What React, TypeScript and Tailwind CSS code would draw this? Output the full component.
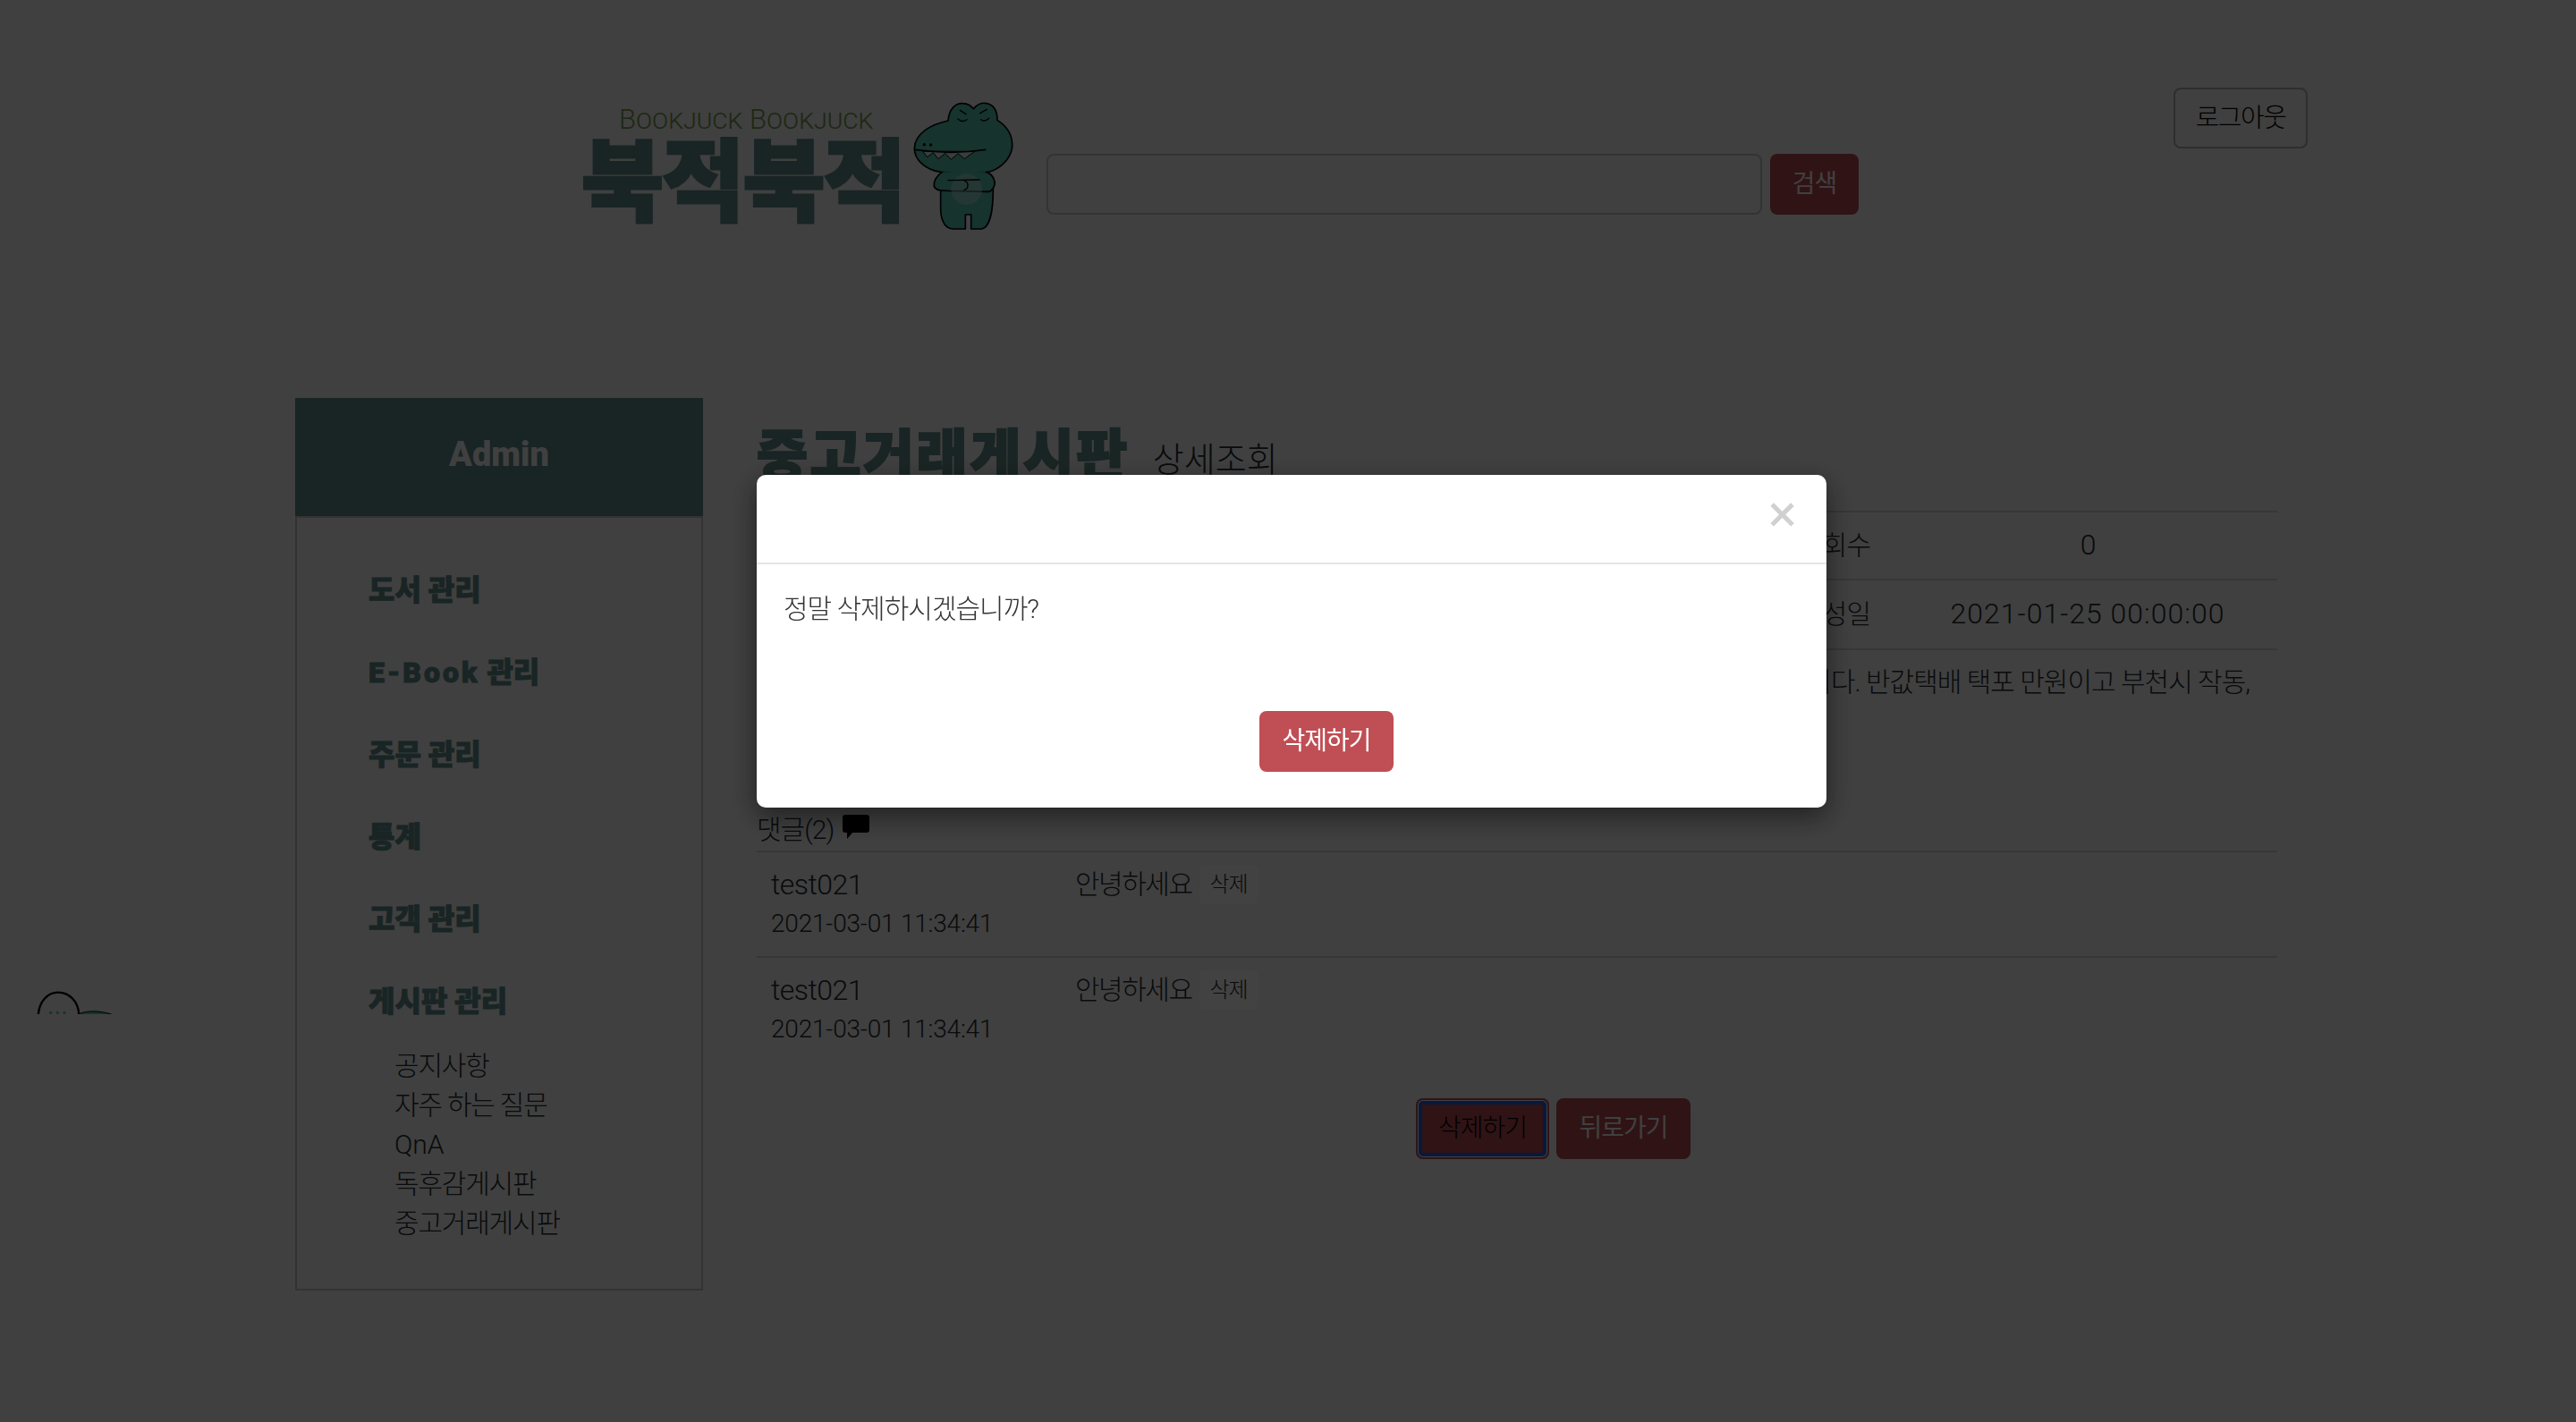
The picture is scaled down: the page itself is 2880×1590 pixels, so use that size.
const sans = "font-['Roboto','Noto_Sans_CJK_KR',sans-serif]";

function Croc() {
  return (
    <svg viewBox="0 0 390 480" className="w-[130px] h-[160px] shrink-0">
      <g stroke="#000" strokeWidth="5" strokeLinejoin="round" strokeLinecap="round">
        <path d="M110 320 L110 385 C110 420 122 452 152 453 L193 453 L193 405 L212 405 L212 453 L248 453 C272 448 286 400 286 320 Z" fill="#4cab9c" />
        <path d="M135 90 C138 50 160 30 185 32 C203 33 214 42 220 50 C232 35 250 28 265 32 C290 38 300 60 300 88 C335 110 352 140 350 178 C345 222 300 262 255 264 C210 268 150 266 110 262 C60 255 22 222 22 182 C24 130 80 102 135 90 Z" fill="#4cab9c" />
        <path d="M50 193 L65 212 L85 197 L102 218 L125 199 L145 220 L168 200 L190 218 L222 194 Z" fill="#c0d0c8" strokeWidth="3" />
        <path d="M25 187 C100 198 190 198 260 187" fill="none" />
        <path d="M175 55 L195 68 M265 52 L242 65 M168 84 Q183 98 198 86 M245 86 Q258 96 272 82" fill="none" strokeWidth="4" />
        <path d="M115 262 C95 275 85 295 88 310 C92 325 115 324 135 325 L270 328 C285 325 295 305 290 290 C285 275 275 265 262 262" fill="#4cab9c" />
        <circle cx="197" cy="320" r="52" fill="#a8c8c0" fillOpacity="0.5" stroke="none" />
        <path d="M135 290 L240 288 M190 292 C205 295 205 320 188 322" fill="none" strokeWidth="4" />
        <circle cx="55" cy="170" r="5" fill="#000" stroke="none" />
        <circle cx="77" cy="171" r="5" fill="#000" stroke="none" />
      </g>
    </svg>
  );
}

function Peek() {
  return (
    <div className="absolute left-[30px] top-[1095px] w-[110px] h-[39px] overflow-hidden">
      <svg viewBox="0 0 330 150" className="w-[110px] h-[50px]">
        <path d="M38 125 C40 72 72 44 105 44 C140 44 175 72 175 125" fill="none" stroke="#000" strokeWidth="7" />
        <path d="M175 116 C205 103 250 106 285 118 L285 130 L175 130 Z" fill="#4cab9c" stroke="#000" strokeWidth="3" />
        <circle cx="80" cy="112" r="5" fill="#4cab9c" />
        <circle cx="103" cy="112" r="5" fill="#4cab9c" />
        <circle cx="126" cy="112" r="5" fill="#4cab9c" />
      </svg>
    </div>
  );
}

function NavItem({ children }: { children: React.ReactNode }) {
  return (
    <div className="h-[92px] flex items-center text-[32px] font-black text-[#567b78] tracking-[0px] [-webkit-text-stroke:1px_#567b78]">
      {children}
    </div>
  );
}

function Comment({ last }: { last?: boolean }) {
  return (
    <div className={last ? "flex pl-[16px] pt-[14px] h-[120px]" : "flex pl-[16px] pt-[14px] h-[118px] border-b-2 border-[#b7b7b7]"}>
      <div className="w-[340px]">
        <div className="text-[32px] leading-[44px] font-light tracking-[-0.5px] text-[#212529]">test021</div>
        <div className="text-[28px] leading-[44px] font-light tracking-[-0.2px] text-[#212529]">2021-03-01 11:34:41</div>
      </div>
      <div className="flex items-start">
        <span className="text-[30px] leading-[44px] font-light tracking-[-1.5px] text-[#212529]">안녕하세요</span>
        <span className="ml-[8px] w-[66px] h-[44px] rounded-[6px] bg-[#dedede] flex items-center justify-center text-[24px] font-light tracking-[-1px] text-[#212529]">
          삭제
        </span>
      </div>
    </div>
  );
}

export default function App() {
  return (
    <div className={`relative w-full h-[1590px] overflow-hidden bg-[#d5d5d5] ${sans}`}>
      <header className="h-[445px] flex items-start pt-[98px] pl-[650px] pr-[300px]">
        <div className="flex w-[520px] shrink-0">
          <div className="w-[365px] pt-[21px] shrink-0">
            <div className="pl-[42px] text-[31px] leading-[30px] [font-variant:small-caps] font-light text-[#658841] tracking-[0px] whitespace-nowrap">
              Bookjuck Bookjuck
            </div>
            <div className="text-[100px] leading-[94px] font-black text-[#567b78] tracking-[-1.75px] whitespace-nowrap [-webkit-text-stroke:3px_#567b78] font-['Noto_Sans_CJK_KR',sans-serif]">
              북적북적
            </div>
          </div>
          <div className="mt-[7px]">
            <Croc />
          </div>
        </div>
        <input
          className="mt-[74px] w-[800px] h-[68px] shrink-0 rounded-[8px] border-2 border-[#acacac] bg-[#d5d5d5]"
          aria-label="검색"
        />
        <button className="mt-[74px] ml-[9px] w-[99px] h-[68px] rounded-[8px] bg-[#a04147] text-[#d5d5d5] text-[28px] font-normal tracking-[-1px]">
          검색
        </button>
        <button className="ml-auto w-[150px] h-[68px] pt-[2px] rounded-[8px] border-2 border-[#9a9a9a] text-[#000] text-[29px] font-light tracking-[-1.5px]">
          로그아웃
        </button>
      </header>

      <main className="flex pl-[330px]">
        <aside className="w-[456px] shrink-0">
          <div className="h-[132px] bg-[#567b78] flex items-center justify-center pb-[6px] text-[#d5d5d5] text-[38px] font-black tracking-[0px]">
            Admin
          </div>
          <div className="h-[866px] border-2 border-[#acacac] pl-[80px] pt-[35px]">
            <NavItem>도서 관리</NavItem>
            <NavItem>
              <span className="tracking-[3px]">E-Book</span>&nbsp;관리
            </NavItem>
            <NavItem>주문 관리</NavItem>
            <NavItem>통계</NavItem>
            <NavItem>고객 관리</NavItem>
            <NavItem>게시판 관리</NavItem>
            <ul className="pl-[29px] mt-[4px] text-[30px] leading-[44px] font-light tracking-[-1.2px] text-[#212529]">
              <li>공지사항</li>
              <li>자주 하는 질문</li>
              <li className="tracking-[0px]">QnA</li>
              <li>독후감게시판</li>
              <li>중고거래게시판</li>
            </ul>
          </div>
        </aside>

        <section className="ml-[60px] w-[1700px] shrink-0">
          <div className="h-[128px] flex items-start pt-[18px] border-b-2 border-[#b7b7b7]">
            <h1 className="text-[62px] leading-[84px] font-black text-[#567b78] tracking-[2.5px] whitespace-nowrap font-['Noto_Sans_CJK_KR',sans-serif] [-webkit-text-stroke:2px_#567b78]">
              중고거래게시판
            </h1>
            <span className="ml-[26px] mt-[23px] text-[38px] leading-[56px] font-light tracking-[0px] text-[#212529]">상세조회</span>
          </div>
          <div className="h-[76px] pb-[2px] flex justify-end items-center border-b-2 border-[#b7b7b7] text-[30px] font-light tracking-[-1px] text-[#212529]">
            <span className="mr-[31px]">조회수</span>
            <span className="w-[424px] text-center text-[32px]">0</span>
          </div>
          <div className="h-[78px] pb-[2px] flex justify-end items-center border-b-2 border-[#b7b7b7] text-[30px] font-light tracking-[-1px] text-[#212529]">
            <span className="mr-[31px]">작성일</span>
            <span className="w-[424px] text-center text-[32px] tracking-[1px]">2021-01-25 00:00:00</span>
          </div>
          <div className="h-[226px] pt-[14px] pr-[31px] text-right whitespace-nowrap text-[30px] leading-[44px] font-light tracking-[-1px] text-[#212529] border-b-2 border-[#b7b7b7] relative">
            <p>판매합니다. 반값택배 택포 만원이고 부천시 작동,</p>
            <div className="absolute left-0 bottom-[1px] flex items-center text-[30px] leading-[44px] tracking-[-1px]">
              댓글(2)
              <svg viewBox="0 0 30 28" className="ml-[10px] w-[30px] h-[28px] mb-[6px]" fill="#000">
                <path d="M3 0 H27 A3 3 0 0 1 30 3 V17 A3 3 0 0 1 27 20 H11 L5 27 V20 H3 A3 3 0 0 1 0 17 V3 A3 3 0 0 1 3 0 Z" />
              </svg>
            </div>
          </div>
          <Comment />
          <Comment last />
          <div className="flex pl-[737px] gap-[8px] mt-[37px]">
            <button className="w-[149px] h-[68px] rounded-[8px] bg-[#a04147] text-black text-[28px] font-light tracking-[-1px] shadow-[inset_0_0_0_2px_#a04147,inset_0_0_0_3px_#d5d5d5,inset_0_0_0_7px_#1a58d0]">
              삭제하기
            </button>
            <button className="w-[150px] h-[68px] rounded-[8px] bg-[#a04147] text-[#d5d5d5] text-[28px] font-normal tracking-[-1px]">
              뒤로가기
            </button>
          </div>
        </section>
      </main>

      <Peek />

      <div className="fixed inset-0 bg-black/70 pl-[846px] pt-[531px]">
        <div className="w-[1196px] h-[372px] rounded-[10px] bg-white shadow-[0_10px_30px_rgba(0,0,0,0.5)] flex flex-col">
          <div className="h-[100px] shrink-0 border-b-2 border-[#e5e5e5] flex justify-end items-start pr-[33px] pt-[22px]">
            <span className="text-[56px] leading-[44px] font-normal text-[#d0d0d0] [-webkit-text-stroke:1px_#d0d0d0] font-['Liberation_Sans',sans-serif]">×</span>
          </div>
          <div className="pl-[30px] pt-[28px] h-[164px] shrink-0 text-[30px] leading-[44px] font-light tracking-[-1px] text-[#333]">
            정말 삭제하시겠습니까?
          </div>
          <div className="pl-[562px]">
            <button className="w-[150px] h-[68px] rounded-[8px] bg-[#c04e55] text-white text-[28px] tracking-[-1px] font-normal">
              삭제하기
            </button>
          </div>
        </div>
      </div>
    </div>
  );
}
